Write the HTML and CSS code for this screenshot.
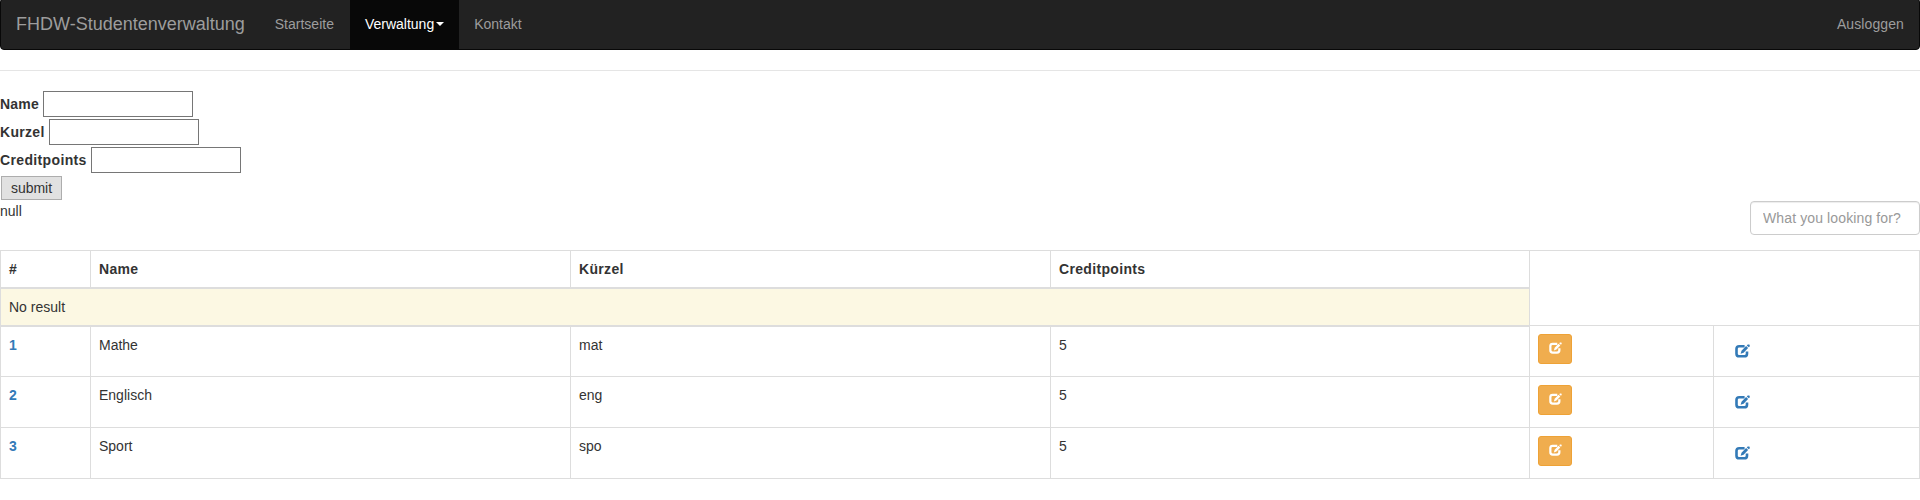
FILE: index.html
```
<!DOCTYPE html>
<html lang="de">
<head>
<meta charset="utf-8">
<title>FHDW-Studentenverwaltung</title>
<link rel="stylesheet" href="styles.css">
</head>
<body>
<svg class="sprite" aria-hidden="true">
  <symbol id="edit" viewBox="0 0 15 14">
    <path d="M9.6 2.2H4.2Q1.5 2.2 1.5 4.8V9.7Q1.5 12.3 4.2 12.3H9.3Q12 12.3 12 9.7V7.4" fill="none" stroke="currentColor" stroke-width="2.6"/>
    <path d="M5.6 9.8 6.5 6.8 11.1 2 13.1 4 8.6 8.8zM11.8 1.5 12.7.6H14.2L14.7 1.1V2.4L13.8 3.3z" fill="currentColor"/>
  </symbol>
</svg>
<nav class="navbar">
  <a class="brand">FHDW-Studentenverwaltung</a>
  <a class="nav-link">Startseite</a>
  <a class="nav-link active">Verwaltung<span class="caret"></span></a>
  <a class="nav-link">Kontakt</a>
  <a class="nav-link logout">Ausloggen</a>
</nav>
<hr class="rule">
<form class="entry">
  <div class="field"><label class="label-name" for="n">Name</label><input class="box" id="n"></div>
  <div class="field"><label class="label-short" for="k">Kurzel</label><input class="box" id="k"></div>
  <div class="field"><label class="label-points" for="c">Creditpoints</label><input class="box" id="c"></div>
  <button class="submit" type="button">submit</button>
</form>
<div class="tools"><span>null</span><input class="search" placeholder="What you looking for?"></div>
<table class="results">
  <colgroup><col class="c-id"><col class="c-text"><col class="c-text"><col class="c-points"><col class="c-edit"><col></colgroup>
  <thead>
    <tr class="head"><th>#</th><th>Name</th><th>Kürzel</th><th>Creditpoints</th><th class="blank" rowspan="2" colspan="2"></th></tr>
    <tr class="warning"><td colspan="4">No result</td></tr>
  </thead>
  <tbody>
    <tr><th>1</th><td>Mathe</td><td>mat</td><td>5</td><td><a class="btn"><svg class="icon-sm"><use href="#edit"/></svg></a></td><td><a class="link"><svg class="icon"><use href="#edit"/></svg></a></td></tr>
    <tr><th>2</th><td>Englisch</td><td>eng</td><td>5</td><td><a class="btn"><svg class="icon-sm"><use href="#edit"/></svg></a></td><td><a class="link"><svg class="icon"><use href="#edit"/></svg></a></td></tr>
    <tr><th>3</th><td>Sport</td><td>spo</td><td>5</td><td><a class="btn"><svg class="icon-sm"><use href="#edit"/></svg></a></td><td><a class="link"><svg class="icon"><use href="#edit"/></svg></a></td></tr>
  </tbody>
</table>
</body>
</html>
```
FILE: styles.css
```
* { box-sizing: border-box; }
body { margin: 0; overflow: hidden; background: #fff; color: #333; font: 14px/20px "Liberation Sans", Arial, sans-serif; }
.sprite { display: none; }
.navbar { display: flex; height: 52px; margin-top: -2px; border: 1px solid #080808; border-radius: 4px; background: #222; color: #9d9d9d; }
.brand { padding: 15px; font-size: 18px; }
.nav-link { display: flex; align-items: center; padding: 15px; }
.active { margin-left: 1px; background: #080808; color: #fff; }
.caret { margin-left: 2px; border: 4px solid transparent; border-top-color: currentColor; border-bottom: 0; }
.logout { margin-left: auto; letter-spacing: .1px; }
.rule { height: 1px; margin: 20px 0; border: 0; background: #e5e5e5; }
.entry { display: flex; flex-direction: column; align-items: flex-start; gap: 2px; }
.field { display: flex; align-items: center; gap: 4px; height: 26px; font-weight: 700; letter-spacing: .3px; }
.label-name { width: 39px; letter-spacing: .2px; }
.label-short { width: 45px; }
.label-points { width: 87px; letter-spacing: .36px; }
.box { width: 150px; height: 26px; padding: 1px 2px; border: 1px solid #767676; background: #fff; }
.submit { width: 61px; height: 24px; margin: 1px 0 0 1px; padding: 0; border: 1px solid #adadad; background: #e1e1e1; color: #333; font: inherit; }
.tools { display: flex; justify-content: space-between; align-items: flex-start; margin: 1px 0 15px; }
.search { width: 170px; height: 34px; padding: 6px 12px; border: 1px solid #ccc; border-radius: 4px; background: #fff; font: inherit; letter-spacing: .12px; box-shadow: inset 0 1px 1px rgba(0, 0, 0, .075); }
.search::placeholder { color: #999; opacity: 1; }
.results { width: 100%; table-layout: fixed; border-collapse: separate; border-spacing: 0; border-top: 1px solid #ddd; border-left: 1px solid #ddd; }
.c-id { width: 90px; }
.c-text { width: 480px; }
.c-points { width: 479px; }
.c-edit { width: 184px; }
.results th, .results td { padding: 8px; border-right: 1px solid #ddd; border-bottom: 1px solid #ddd; text-align: left; vertical-align: top; }
.results .head th { height: 38px; border-bottom-width: 2px; letter-spacing: .33px; }
.results .head .blank { height: auto; border-bottom-width: 1px; }
.results .warning td { height: 37px; background: #fcf8e3; }
.results tbody td { height: 51px; }
.results tbody th { height: 51px; color: #337ab7; }
.results tbody tr:first-child > :nth-child(-n+4) { border-top: 1px solid #ddd; }
.btn { display: flex; align-items: center; justify-content: center; width: 34px; height: 30px; border: 1px solid #eea236; border-radius: 3px; background: #f0ad4e; color: #fff; }
.icon-sm { display: block; width: 13px; height: 12px; margin: -2px 0 0 1px; }
.link { display: block; padding: 10px 13px 0; color: #337ab7; }
.icon { display: block; width: 15px; height: 14px; }
```
